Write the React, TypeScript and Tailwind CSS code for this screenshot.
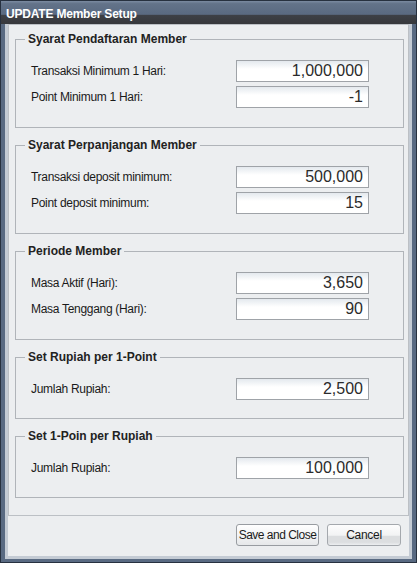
import React from "react";

const groups: { title: string; rows: [string, string][] }[] = [
  {
    title: "Syarat Pendaftaran Member",
    rows: [
      ["Transaksi Minimum 1 Hari:", "1,000,000"],
      ["Point Minimum 1 Hari:", "-1"],
    ],
  },
  {
    title: "Syarat Perpanjangan Member",
    rows: [
      ["Transaksi deposit minimum:", "500,000"],
      ["Point deposit minimum:", "15"],
    ],
  },
  {
    title: "Periode Member",
    rows: [
      ["Masa Aktif (Hari):", "3,650"],
      ["Masa Tenggang (Hari):", "90"],
    ],
  },
  {
    title: "Set Rupiah per 1-Point",
    rows: [["Jumlah Rupiah:", "2,500"]],
  },
  {
    title: "Set 1-Poin per Rupiah",
    rows: [["Jumlah Rupiah:", "100,000"]],
  },
];

function Group({ title, rows, first }: { title: string; rows: [string, string][]; first?: boolean }) {
  return (
    <fieldset className={`border border-[#b0b4b9] ${first ? "" : "mt-[10px]"}`}>
      <legend className="ml-[9px] px-[3px] h-[14px] leading-[14px] text-[12px] font-bold text-[#222]">
        {title}
      </legend>
      <div className={`pl-[15px] pt-[14px] ${rows.length > 1 ? "pb-[19px]" : "pb-[18px]"} flex flex-col gap-[4px]`}>
        {rows.map(([label, value]) => (
          <div key={label} className="flex items-center">
            <div className="w-[205px] text-[12px] tracking-[-0.3px] text-[#1a1a1a] leading-[14px]">{label}</div>
            <div className="w-[133px] h-[22px] border border-[#9fa3a8] bg-linear-to-b from-[#e4e9ee] via-white via-[40%] to-white flex items-center justify-end pr-[5px] text-[16px] leading-[20px] text-[#2b2b2b]">
              {value}
            </div>
          </div>
        ))}
      </div>
    </fieldset>
  );
}

export default function App() {
  return (
    <div className="w-[417px] h-[563px] flex flex-col border border-[#27313f] bg-[#596a82] font-['Liberation_Sans',Arial,sans-serif] overflow-hidden">
      <div className="h-[23px] shrink-0 pl-[5px] pt-[6px] bg-[linear-gradient(to_bottom,#7b8ba1_0%,#637389_12%,#5a6a81_58%,#3d4046_62%,#37383c_100%)]">
        <div className="text-white font-bold text-[12px] leading-[14px] tracking-[-0.2px]">UPDATE Member Setup</div>
      </div>
      <div className="flex-1 flex flex-col px-[4px] pb-[3px]">
        <div className="flex-1 flex flex-col border-[3px] border-t-0 border-[#c4cbd4] bg-[#eceef0]">
          <div className="h-[492px] border border-[#bcc0c5] pt-[7px] pl-[6px] pr-[4px]">
            {groups.map((g, i) => (
              <Group key={g.title} title={g.title} rows={g.rows} first={i === 0} />
            ))}
          </div>
          <div className="flex justify-end gap-[8px] pt-[8px] pr-[8px]">
            <button className="w-[83px] h-[22px] rounded-[3px] border border-[#989ca1] bg-linear-to-b from-white to-[#e6e8ea] text-[12px] tracking-[-0.5px] text-[#1a1a1a] leading-[14px]">
              Save and Close
            </button>
            <button className="w-[74px] h-[22px] rounded-[3px] border border-[#a4a8ad] bg-[linear-gradient(to_bottom,#fdfdfd_0%,#f2f3f4_52%,#dcdee0_54%,#dcdee0_86%,#eceef0_100%)] text-[12px] tracking-[-0.3px] text-[#1a1a1a] leading-[14px]">
              Cancel
            </button>
          </div>
        </div>
      </div>
    </div>
  );
}
